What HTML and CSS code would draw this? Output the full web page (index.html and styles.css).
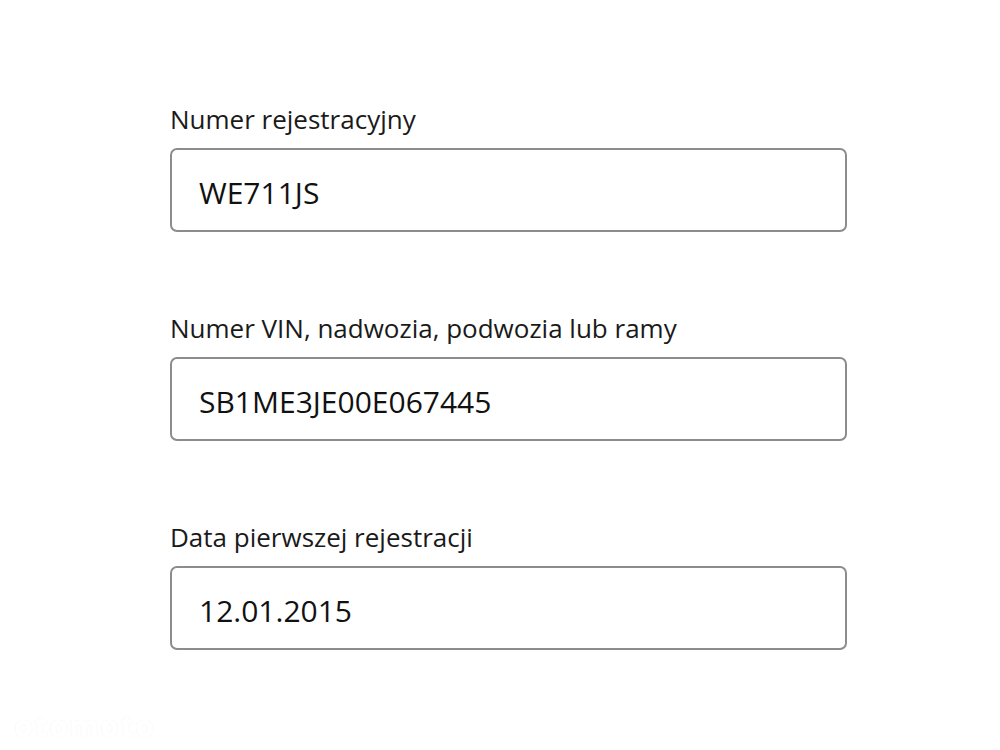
FILE: index.html
```html
<!DOCTYPE html>
<html lang="pl">
<head>
<meta charset="utf-8">
<title>Dane pojazdu</title>
<link rel="stylesheet" href="styles.css">
</head>
<body>
<main class="form">
  <div class="field">
    <label class="label" for="reg">Numer rejestracyjny</label>
    <input class="input" id="reg" type="text" value="WE711JS" readonly>
  </div>
  <div class="field">
    <label class="label" for="vin">Numer VIN, nadwozia, podwozia lub ramy</label>
    <input class="input" id="vin" type="text" value="SB1ME3JE00E067445" readonly>
  </div>
  <div class="field">
    <label class="label" for="date">Data pierwszej rejestracji</label>
    <input class="input" id="date" type="text" value="12.01.2015" readonly>
  </div>
</main>
<div class="watermark">otomoto</div>
</body>
</html>
```
FILE: styles.css
```css
html, body {
  margin: 0;
  padding: 0;
  background: #ffffff;
}
body {
  width: 1000px;
  height: 750px;
  overflow: hidden;
  position: relative;
  font-family: "Open Sans", "Noto Sans", sans-serif;
  color: #1a1a1a;
}
.form {
  display: flex;
  flex-direction: column;
  gap: 78px;
  padding: 101px 0 0 170px;
  width: 677px;
}
.field {
  display: flex;
  flex-direction: column;
  gap: 11px;
}
.label {
  font-size: 26px;
  line-height: 36px;
  color: #1a1a1a;
}
.input {
  box-sizing: border-box;
  width: 677px;
  height: 84px;
  border: 2px solid #8c8c8c;
  border-radius: 7px;
  padding: 4px 27px 0;
  font-family: "Open Sans", "Noto Sans", sans-serif;
  font-size: 30px;
  color: #111111;
  background: #ffffff;
  outline: none;
}
.watermark {
  position: absolute;
  left: 14px;
  bottom: 4px;
  font-family: "Open Sans", sans-serif;
  font-weight: 800;
  font-size: 30px;
  letter-spacing: 1px;
  color: #ffffff;
  text-shadow: 0 0 1px #efefef;
}
```
